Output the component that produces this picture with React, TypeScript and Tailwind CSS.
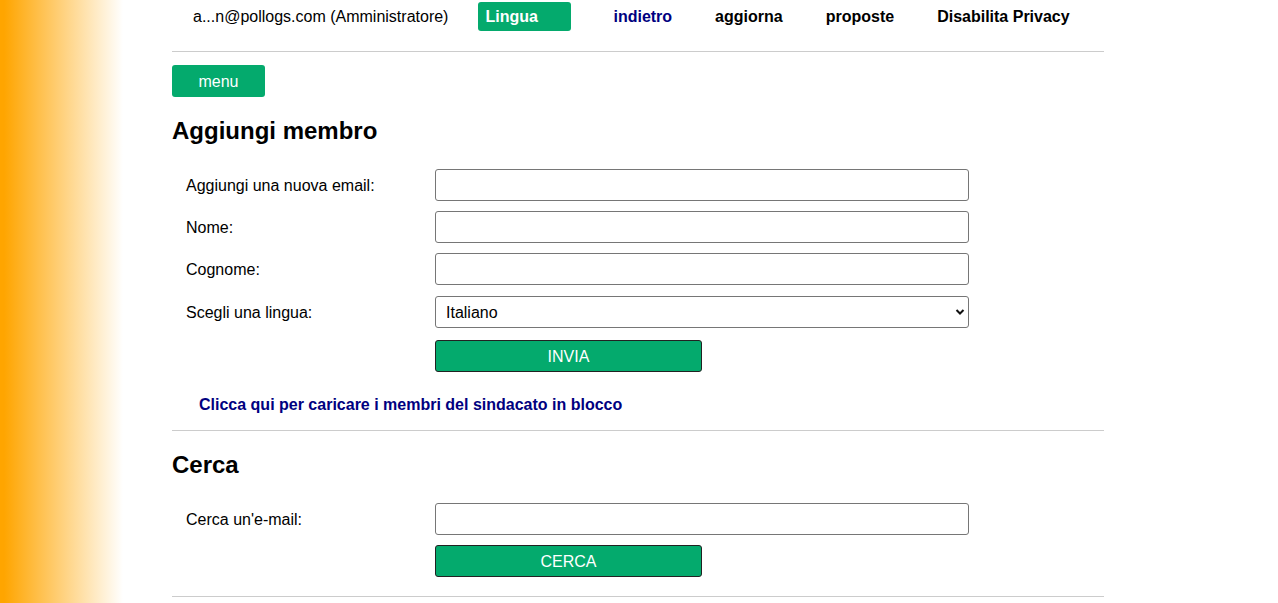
import React from "react";

const font = { fontFamily: '"Liberation Sans", Arial, sans-serif' };

function Row({ label, children, mt }: { label: string; children: React.ReactNode; mt: string }) {
  return (
    <div className={`flex items-center ${mt}`}>
      <label className="w-[263px] pl-[14px] pt-[2px] text-[16px] text-black">{label}</label>
      {children}
    </div>
  );
}

export default function App() {
  return (
    <div
      className="min-h-screen w-full bg-[linear-gradient(to_right,#ffa500_0px,#ffa500_4px,#ffffff_123px)] text-black"
      style={font}
    >
      <div className="ml-[172px] w-[932px]">
        {/* header */}
        <div className="flex h-[33px] items-center">
          <span className="ml-[21px] text-[16px]">a...n@pollogs.com (Amministratore)</span>
          <button className="ml-[30px] h-[29px] w-[93px] rounded-[3px] bg-[#04aa6d] pl-[7px] text-left text-[16px] font-bold text-white">
            Lingua
          </button>
          <a className="ml-[42px] text-[16px] font-bold text-[#000080]">indietro</a>
          <a className="ml-[43px] text-[16px] font-bold text-black">aggiorna</a>
          <a className="ml-[43px] text-[16px] font-bold text-black">proposte</a>
          <a className="ml-[43px] text-[16px] font-bold text-black">Disabilita Privacy</a>
        </div>
        <div className="mt-[18px] h-px bg-[#cccccc]" />
        <button className="mt-[13px] h-[32px] w-[93px] rounded-[3px] bg-[#04aa6d] pt-[1px] text-[16px] text-white">
          menu
        </button>

        <h2 className="mt-[20px] h-[28px] text-[24px] font-bold leading-[28px]">Aggiungi membro</h2>

        <Row label="Aggiungi una nuova email:" mt="mt-[24px]">
          <input className="h-[32px] w-[534px] rounded-[3px] border border-[#767676] bg-white px-[10px]" />
        </Row>
        <Row label="Nome:" mt="mt-[10px]">
          <input className="h-[32px] w-[534px] rounded-[3px] border border-[#767676] bg-white px-[10px]" />
        </Row>
        <Row label="Cognome:" mt="mt-[10px]">
          <input className="h-[32px] w-[534px] rounded-[3px] border border-[#767676] bg-white px-[10px]" />
        </Row>
        <Row label="Scegli una lingua:" mt="mt-[11px]">
          <div className="relative h-[32px] w-[534px] rounded-[3px] border border-[#767676] bg-white">
            <select className="h-full w-full appearance-none bg-transparent pl-[10px] pt-[1px] text-[16px] text-black outline-none" style={font}>
              <option>Italiano</option>
            </select>
            <svg
              className="pointer-events-none absolute right-[3px] top-[11px]"
              width="10"
              height="8"
              viewBox="0 0 10 8"
            >
              <path d="M1.5 2 L5 5.5 L8.5 2" fill="none" stroke="#111" strokeWidth="2" />
            </svg>
          </div>
        </Row>
        <div className="mt-[12px] flex">
          <div className="w-[263px]" />
          <button className="h-[32px] w-[267px] rounded-[3px] border border-[#222] bg-[#04aa6d] pt-[1px] text-[16px] text-white">
            INVIA
          </button>
        </div>

        <div className="mt-[23px] h-[20px] pl-[27px] text-[16px] font-bold leading-[20px] text-[#000080]">
          <a>Clicca qui per caricare i membri del sindacato in blocco</a>
        </div>
        <div className="mt-[15px] h-px bg-[#cccccc]" />

        <h2 className="mt-[20px] h-[28px] text-[24px] font-bold leading-[28px]">Cerca</h2>

        <Row label="Cerca un'e-mail:" mt="mt-[24px]">
          <input className="h-[32px] w-[534px] rounded-[3px] border border-[#767676] bg-white px-[10px]" />
        </Row>
        <div className="mt-[10px] flex">
          <div className="w-[263px]" />
          <button className="h-[32px] w-[267px] rounded-[3px] border border-[#222] bg-[#04aa6d] pt-[1px] text-[16px] text-white">
            CERCA
          </button>
        </div>
        <div className="mt-[19px] h-px bg-[#cccccc]" />
        <div className="h-[40px]" />
      </div>
    </div>
  );
}
